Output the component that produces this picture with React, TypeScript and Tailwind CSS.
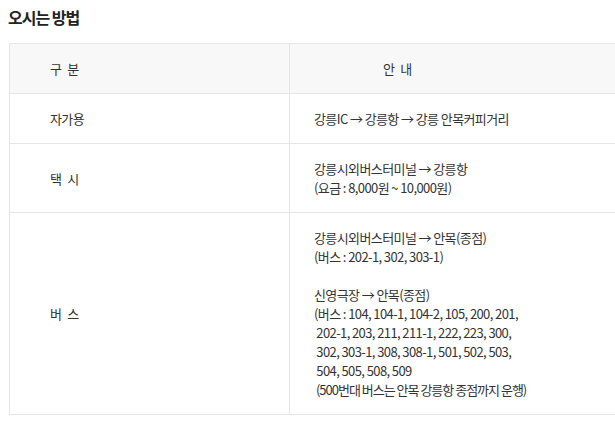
const FONT = { fontFamily: '"Noto Sans CJK KR", "Noto Sans", sans-serif' }

interface Row {
  label: string
  lines: string[]
}

const ROWS: Row[] = [
  { label: '자가용', lines: ['강릉IC → 강릉항 → 강릉 안목커피거리'] },
  { label: '택\u2002시', lines: ['강릉시외버스터미널 → 강릉항', '(요금 : 8,000원 ~ 10,000원)'] },
  {
    label: '버\u2002스',
    lines: [
      '강릉시외버스터미널 → 안목(종점)',
      '(버스 : 202-1, 302, 303-1)',
      '',
      '신영극장 → 안목(종점)',
      '(버스 : 104, 104-1, 104-2, 105, 200, 201,',
      ' 202-1, 203, 211, 211-1, 222, 223, 300,',
      ' 302, 303-1, 308, 308-1, 501, 502, 503,',
      ' 504, 505, 508, 509',
      ' (500번대 버스는 안목 강릉항 종점까지 운행)',
    ],
  },
]

export default function App() {
  return (
    <div className="w-[615px] h-[428px] overflow-hidden bg-white text-[#333]" style={FONT}>
      <h2 className="pl-[8px] pt-[5px] h-[43px] text-[16px] font-bold text-[#222] tracking-[-1px]">
        오시는 방법
      </h2>
      <table className="ml-[9px] w-[620px] border-collapse text-[13px] leading-[19px] tracking-[-0.6px]">
        <thead>
          <tr className="bg-[#f8f8f8]">
            <th className="w-[280px] border border-[#e6e6e6] pl-[40px] py-[15px] text-left font-normal">
              구{'\u2002'}분
            </th>
            <th className="border border-[#e6e6e6] pl-[93px] py-[15px] text-left font-normal">
              안{'\u2002'}내
            </th>
          </tr>
        </thead>
        <tbody>
          {ROWS.map((row) => (
            <tr key={row.label}>
              <td className="border border-[#e6e6e6] pl-[40px] py-[15px] align-middle">{row.label}</td>
              <td className="border border-[#e6e6e6] pl-[24px] py-[15px] align-middle whitespace-pre">
                {row.lines.map((line, i) => (
                  <div
                    key={i}
                    className={i === 8 ? 'h-[19px] tracking-[-1px]' : 'h-[19px]'}
                  >
                    {line}
                  </div>
                ))}
              </td>
            </tr>
          ))}
        </tbody>
      </table>
    </div>
  )
}
